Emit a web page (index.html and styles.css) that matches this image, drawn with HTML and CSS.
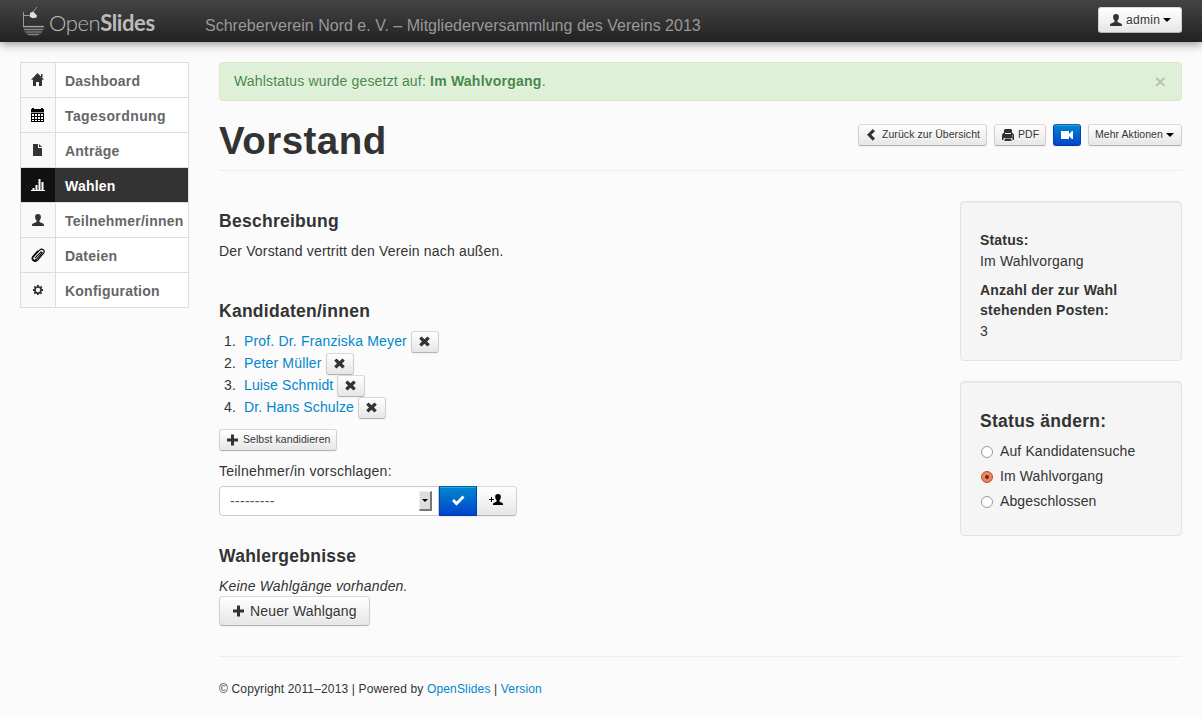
FILE: index.html
```html
<!DOCTYPE html>
<html lang="de">
<head>
<meta charset="utf-8">
<title>Vorstand – OpenSlides</title>
<link rel="stylesheet" href="styles.css">
</head>
<body>
<svg class="sprite" width="0" height="0">
  <symbol id="home" viewBox="0 0 14 14"><path d="M6.500 0 13 6.800H11V13H8V9H5v4H2V6.800H0Z"/><path d="M10 1h1.500v4L10 3.500Z"/></symbol>
  <symbol id="calendar" viewBox="0 0 14 14"><path d="M0 1h1V0h2v1h7V0h2v1h1v3H0ZM0 5h13v9H0Z"/><path class="rule" d="M0 4h13v1H0z"/><path class="holes" d="M1 6h2v2H1zM4 6h2v2H4zM7 6h2v2H7zM10 6h2v2h-2zM1 9h2v2H1zM4 9h2v2H4zM7 9h2v2H7zM10 9h2v2h-2zM1 12h2v1H1zM4 12h2v1H4zM7 12h2v1H7zM10 12h2v1h-2z"/></symbol>
  <symbol id="file" viewBox="0 0 14 14"><path d="M2 1h5v4h4v8H2Z"/><path d="M8 1l3 3H8Z"/></symbol>
  <symbol id="stats" viewBox="0 0 14 14"><path d="M0 12h14v1H0zM1.500 10h2v2h-2zM4.500 7h2v5h-2zM7.500 1h2v11h-2zM10.500 4h2v8h-2z"/></symbol>
  <symbol id="user" viewBox="0 0 14 14"><path d="M7 1C9 1 10 2.200 9.900 4c0 1.600-.5 2.700-1.400 3.400V9L12 10.500c.8.400 1 .9 1 2.500H1c0-1.600.2-2.100 1-2.500L5.500 9V7.400C4.600 6.700 4.100 5.600 4.100 4 4 2.200 5 1 7 1Z"/></symbol>
  <symbol id="clip" viewBox="0 0 14 14"><path class="stroke" d="M4.200 9.800 9.600 4.300c.9-1 2 .1 1.100 1.100L5.200 11.500c-2 2-4.800-.5-2.900-2.600L8.600 2.200c2.500-2.500 6 .3 3.900 3.100L6.700 12.200c-2.700 2.800-7.200-.2-5-3.600L6.500 3.200"/></symbol>
  <symbol id="cog" viewBox="0 0 14 14"><path fill-rule="evenodd" d="M6 2h2v1.200l1.200.5.900-.9 1.300 1.300-.9.900.5 1.100H12v2h-1.200l-.5 1.100.9.900-1.300 1.300-.9-.9-1.200.5V12H6v-1.100l-1.200-.5-.9.900-1.300-1.300.9-.9L3 8H2V6h1.100l.5-1.100-.9-.9L4 2.800l.9.900L6 3.200ZM7 4.800a2.200 2.200 0 1 0 0 4.400 2.200 2.200 0 0 0 0-4.400Z"/></symbol>
  <symbol id="chevron" viewBox="0 0 14 14"><path d="M7.800 1 10 3.200 6.300 6.800 10 10.400 7.800 12.700 2 6.800Z"/></symbol>
  <symbol id="print" viewBox="0 0 14 14"><path d="M4 1h6l1 1v3h1l1 2v5h-1.500v-2h-9v2H1V7l1-2h1V2ZM4 10.500h6l.7 2.500H3.300Z"/><path class="gap" d="M4 5h6v1H4zM11 7.500h1v1h-1z"/></symbol>
  <symbol id="video" viewBox="0 0 14 14"><path d="M1 3h8v3l3-3h1v8h-1L9 8v3H1Z"/></symbol>
  <symbol id="plus" viewBox="0 0 14 14"><path d="M5 1.500h3v4h4v3H8v4H5v-4H1v-3h4Z"/></symbol>
  <symbol id="remove" viewBox="0 0 14 14"><path d="M3.500 1.500 6.500 4.200 9.500 1.500l2.300 2.200L9 6.500l2.800 2.800-2.300 2.200-3-2.700-3 2.700-2.300-2.200L4 6.500 1.200 3.700Z"/></symbol>
  <symbol id="ok" viewBox="0 0 14 14"><path d="m0 7 2-2 2.500 2.500L10.500 1.500l2 2-8 8.300Z"/></symbol>
  <symbol id="useradd" viewBox="0 0 14 14"><path d="M9 0c2 0 3 1.200 2.800 3-.1 1.500-.5 2.500-1.300 3.200v1.500l2.500 1.100c.8.300 1 .9 1 2.200H4c0-1.300.2-1.900 1-2.200l2.500-1.100V6.200C6.700 5.500 6.300 4.500 6.200 3 6 1.200 7 0 9 0ZM2 3h1v2h2v1H3v2H2V6H0V5h2Z"/></symbol>
</svg>

<header class="topbar">
  <a class="brand">
    <svg class="boat" viewBox="0 0 24 32"><path class="mast" d="M2.500 5v14M2.500 8.500H9M12 5l4-5"/><path class="lamp" d="m9 6 3-1.500 4 4-.5 2-3.500.8-3-1.300Z"/><path class="hull" d="M2 19.500h21c0 6-4 9.800-10.500 9.800S2 25.500 2 19.500Z"/><path class="rim" d="M2 19.500h21"/><path class="planks" d="M3 22.500h19M4.500 25h16M7 27.500h11"/></svg>
    <span class="logo"><span class="thin">Open</span><b>Slides</b></span>
  </a>
  <span class="event">Schreberverein Nord e. V. – Mitgliederversammlung des Vereins 2013</span>
  <button class="btn user"><svg class="i"><use href="#user"/></svg><span>admin</span><i class="caret"></i></button>
</header>

<div class="layout">
  <nav class="side">
    <a class="item"><span class="ico"><svg class="i"><use href="#home"/></svg></span><span class="txt">Dashboard</span></a>
    <a class="item"><span class="ico"><svg class="i black"><use href="#calendar"/></svg></span><span class="txt wide">Tagesordnung</span></a>
    <a class="item"><span class="ico"><svg class="i"><use href="#file"/></svg></span><span class="txt">Anträge</span></a>
    <a class="item active"><span class="ico"><svg class="i"><use href="#stats"/></svg></span><span class="txt">Wahlen</span></a>
    <a class="item"><span class="ico"><svg class="i"><use href="#user"/></svg></span><span class="txt">Teilnehmer/innen</span></a>
    <a class="item"><span class="ico"><svg class="i black"><use href="#clip"/></svg></span><span class="txt">Dateien</span></a>
    <a class="item"><span class="ico"><svg class="i"><use href="#cog"/></svg></span><span class="txt">Konfiguration</span></a>
  </nav>

  <main class="main">
    <div class="alert"><span>Wahlstatus wurde gesetzt auf: <b>Im Wahlvorgang</b>.</span><span class="close">×</span></div>
    <div class="pagehead">
      <h1>Vorstand</h1>
      <div class="actions">
        <button class="btn mini back"><svg class="i"><use href="#chevron"/></svg><span>Zurück zur Übersicht</span></button>
        <button class="btn mini pdf"><svg class="i"><use href="#print"/></svg><span>PDF</span></button>
        <button class="btn mini primary cam"><svg class="i"><use href="#video"/></svg></button>
        <button class="btn mini more"><span>Mehr Aktionen</span><i class="caret"></i></button>
      </div>
    </div>
    <div class="columns">
      <section class="content">
        <h4>Beschreibung</h4>
        <p class="desc">Der Vorstand vertritt den Verein nach außen.</p>
        <h4>Kandidaten/innen</h4>
        <ol class="cands">
          <li><span class="num">1.</span><a>Prof. Dr. Franziska Meyer</a><button class="btn mini x"><svg class="i"><use href="#remove"/></svg></button></li>
          <li><span class="num">2.</span><a>Peter Müller</a><button class="btn mini x"><svg class="i"><use href="#remove"/></svg></button></li>
          <li><span class="num">3.</span><a class="snug">Luise Schmidt</a><button class="btn mini x"><svg class="i"><use href="#remove"/></svg></button></li>
          <li><span class="num">4.</span><a class="snug">Dr. Hans Schulze</a><button class="btn mini x"><svg class="i"><use href="#remove"/></svg></button></li>
        </ol>
        <button class="btn mini self"><svg class="i"><use href="#plus"/></svg><span>Selbst kandidieren</span></button>
        <label class="lbl">Teilnehmer/in vorschlagen:</label>
        <div class="append">
          <div class="select"><span>---------</span><span class="drop"><i class="caret"></i></span></div>
          <button class="btn primary ok"><svg class="i"><use href="#ok"/></svg></button>
          <button class="btn add"><svg class="i black"><use href="#useradd"/></svg></button>
        </div>
        <h4 class="results">Wahlergebnisse</h4>
        <p class="none">Keine Wahlgänge vorhanden.</p>
        <button class="btn new"><svg class="i"><use href="#plus"/></svg><span>Neuer Wahlgang</span></button>
      </section>
      <aside class="wells">
        <div class="well info">
          <b>Status:</b>
          <span class="val">Im Wahlvorgang</span>
          <b class="posts">Anzahl der zur Wahl<br>stehenden Posten:</b>
          <span class="val">3</span>
        </div>
        <div class="well change">
          <h4>Status ändern:</h4>
          <label class="radio"><i></i><span>Auf Kandidatensuche</span></label>
          <label class="radio on"><i></i><span>Im Wahlvorgang</span></label>
          <label class="radio"><i></i><span>Abgeschlossen</span></label>
        </div>
      </aside>
    </div>
    <footer>© Copyright 2011–2013 | Powered by <a>OpenSlides</a> | <a>Version</a></footer>
  </main>
</div>
</body>
</html>
```
FILE: styles.css
```css
* { box-sizing: border-box; }
body { margin: 0; min-height: 719px; background: #fbfbfb; color: #333; font: 14px/20px "Liberation Sans", Arial, sans-serif; letter-spacing: .17px; }
a { color: #08c; text-decoration: none; }
h1, h4, p, ol { margin: 0; padding: 0; }
.sprite { position: absolute; }
.i { width: 14px; height: 14px; fill: #333; flex: none; display: block; }
.black { fill: #000; }
.holes { fill: #f9f9f9; }
.rule { fill: #999; }
.gap { fill: #f2f2f2; }
.stroke { fill: none; stroke: #000; stroke-width: 1.1; stroke-linecap: round; }
.caret { width: 0; height: 0; border: 4px solid transparent; border-top-color: #000; border-bottom: 0; flex: none; }

.topbar { height: 42px; display: flex; align-items: flex-start; padding: 0 20px; background: linear-gradient(#444, #222); box-shadow: 0 1px 10px rgba(0,0,0,.5); }
.brand { width: 185px; display: flex; color: #bbb; padding-top: 7px; }
.boat { width: 24px; height: 32px; margin-left: 1px; }
.mast { fill: none; stroke: #999; stroke-width: 1; }
.lamp { fill: #ddd; }
.hull { fill: #444; }
.rim { fill: none; stroke: #aaa; stroke-width: 1.2; }
.planks { fill: none; stroke: #858585; stroke-width: 1.2; }
.logo { font: 300 22px/32px Lato, sans-serif; margin-left: 4px; letter-spacing: -.4px; white-space: nowrap; }
.logo b { font-weight: 700; }
.event { flex: 1; font-size: 16px; line-height: 20px; padding-top: 16px; color: #999; white-space: nowrap; letter-spacing: .015px; }

.btn { display: flex; align-items: center; height: 30px; margin: 0; padding: 0 12px; border: 1px solid #ccc; border-color: #d9d9d9 #d0d0d0 #b3b3b3; border-radius: 4px; background: linear-gradient(#fff, #e6e6e6); box-shadow: inset 0 1px 0 rgba(255,255,255,.2), 0 1px 2px rgba(0,0,0,.05); color: #333; font: 14px/20px "Liberation Sans", Arial, sans-serif; letter-spacing: .15px; text-shadow: 0 1px 1px rgba(255,255,255,.75); white-space: nowrap; }
.btn.mini { height: 22px; padding: 0 6px; font-size: 10.5px; border-radius: 3px; letter-spacing: .06px; }
.btn.mini span { position: relative; top: -1px; }
.btn.primary { background: linear-gradient(#08c, #04c); border-color: #06b #04b #0037a0; }
.btn.primary .i { fill: #fff; }
.btn.user { height: 26px; width: 84px; margin-top: 7px; padding: 0 10px; font-size: 12px; border-radius: 3px; gap: 3px; letter-spacing: .3px; }

.layout { display: flex; gap: 30px; padding: 20px 20px 0; }
.side { width: 169px; flex: none; border: 1px solid #ddd; height: 246px; background: #fff; }
.item { display: flex; height: 35px; border-bottom: 1px solid #ddd; color: #666; font-weight: bold; }
.item:last-child { border-bottom: 0; height: 34px; }
.ico { width: 35px; display: flex; align-items: center; padding-left: 10px; background: #f9f9f9; border-right: 1px solid #ddd; }
.txt { padding: 8px 0 0 9px; white-space: nowrap; letter-spacing: .23px; }
.txt.wide { letter-spacing: .4px; }
.item.active { background: #333; color: #fff; }
.active .ico { background: #111; border-color: #333; }
.active .i { fill: #fff; }

.main { flex: 1; }
.alert { display: flex; justify-content: space-between; height: 39px; padding: 8px 15px 0 14px; border: 1px solid #d6e9c6; border-radius: 4px; background: #dff0d8; color: #468847; text-shadow: 0 1px 0 rgba(255,255,255,.5); }
.alert b { letter-spacing: .23px; }
.close { font: bold 16px/22px "DejaVu Sans", sans-serif; color: #b2c0ad; letter-spacing: 0; margin-right: -1px; }
.pagehead { height: 70px; border-bottom: 1px solid #eee; display: flex; justify-content: space-between; }
h1 { font-size: 38.5px; line-height: 40px; padding-top: 20px; letter-spacing: .45px; }
.actions { display: flex; gap: 7px; padding-top: 23px; }
.back { width: 129px; gap: 3px; }
.pdf { width: 52px; gap: 3px; }
.cam { width: 28px; }
.more { width: 94px; gap: 3px; }

.columns { display: flex; justify-content: space-between; padding-top: 30px; }
.content { padding-top: 10px; }
h4 { font-size: 17.5px; line-height: 20px; letter-spacing: .27px; }
.desc { margin: 10px 0 40px; }
.cands { list-style: none; margin: 9px 0 11px; }
.cands li { height: 22px; display: flex; align-items: flex-start; }
.cands a, .num { line-height: 22px; }
.num { width: 20px; margin-left: 5px; }
.cands a { margin-right: 4px; }
.cands .snug { letter-spacing: .11px; }
.x { width: 28px; position: relative; top: 1px; }
.self { width: 118px; gap: 3px; }
.lbl { display: block; margin: 10px 0 5px; letter-spacing: .24px; }
.append { display: flex; }
.select { width: 220px; height: 30px; display: flex; justify-content: space-between; border: 1px solid #ccc; border-radius: 4px 0 0 4px; background: #fff; padding: 4px 6px 4px 10px; color: #555; letter-spacing: .3px; }
.drop { width: 13px; height: 20px; display: flex; align-items: center; justify-content: center; background: #ddd; border: 1px solid #eee; border-right: 2px solid #777; border-bottom: 2px solid #777; }
.drop .caret { border-width: 3px; border-bottom: 0; }
.ok { width: 38px; border-radius: 0; }
.add { width: 40px; border-left: 0; border-radius: 0 4px 4px 0; }
.results { margin-top: 30px; }
.none { margin-top: 10px; font-style: italic; }
.new { width: 151px; gap: 4px; }

.wells { width: 222px; }
.well { background: #f5f5f5; border: 1px solid #e3e3e3; border-radius: 4px; box-shadow: inset 0 1px 1px rgba(0,0,0,.05); padding: 28px 19px 0; }
.well b, .val { display: block; }
.info { height: 160px; margin-bottom: 20px; }
.val { padding-top: 1px; height: 21px; }
.posts { margin-top: 9px; letter-spacing: .22px; }
.change { height: 155px; padding-top: 29px; }
.change h4 { margin-bottom: 8px; }
.radio { display: flex; height: 25px; padding-top: 2px; gap: 7px; letter-spacing: .12px; }
.radio i { width: 12px; height: 12px; margin: 5px 0 0 1px; border: 1px solid #999; border-radius: 50%; background: #fff; }
.radio.on i { border-color: #b5482a; background: radial-gradient(circle, #6b3322 0 1.7px, #f08660 2.300px); }

footer { margin-top: 30px; border-top: 1px solid #eee; padding-top: 22px; font-size: 12px; letter-spacing: .155px; }
```
